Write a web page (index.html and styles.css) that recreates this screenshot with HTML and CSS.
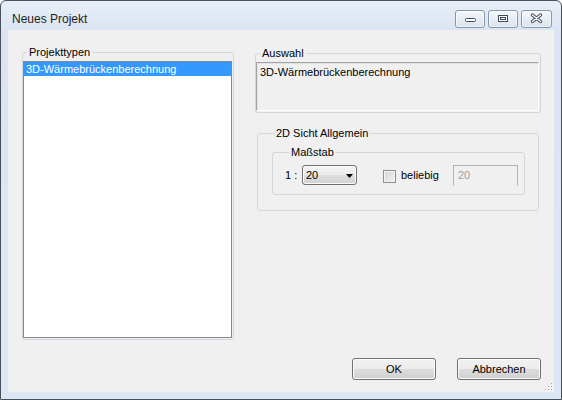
FILE: index.html
```html
<!DOCTYPE html>
<html lang="de">
<head>
<meta charset="utf-8">
<title>Neues Projekt</title>
<link rel="stylesheet" href="styles.css">
</head>
<body>
<div class="window">
  <div class="titlebar">
    <span class="title">Neues Projekt</span>
    <div class="caption-buttons">
      <span class="cbtn cbtn-min">
        <svg width="30" height="17" viewBox="0 0 30 17"><rect x="10.5" y="8.5" width="10" height="3" rx="1" fill="#fff" stroke="#3e4a5a"/></svg>
      </span>
      <span class="cbtn cbtn-max">
        <svg width="30" height="17" viewBox="0 0 30 17"><rect x="10.5" y="5.5" width="9" height="6" fill="#fff" stroke="#3e4a5a"/><rect x="12.5" y="7.5" width="5" height="2" fill="#fff" stroke="#3e4a5a"/></svg>
      </span>
      <span class="cbtn cbtn-close">
        <svg width="31" height="17" viewBox="0 0 31 17"><path d="M11.5 5 L19.5 11.5 M19.5 5 L11.5 11.5" stroke="#3e4a5a" stroke-width="3.4" stroke-linecap="round" fill="none"/><path d="M11.5 5 L19.5 11.5 M19.5 5 L11.5 11.5" stroke="#fff" stroke-width="1.4" stroke-linecap="round" fill="none"/></svg>
      </span>
    </div>
  </div>
  <div class="client">
    <div class="top">
      <fieldset class="group group-types">
        <legend>Projekttypen</legend>
        <div class="listbox">
          <div class="item item-selected">3D-Wärmebrückenberechnung</div>
        </div>
      </fieldset>
      <div class="right">
        <fieldset class="group group-auswahl">
          <legend>Auswahl</legend>
          <div class="readonly">3D-Wärmebrückenberechnung</div>
        </fieldset>
        <fieldset class="group group-sicht">
          <legend>2D Sicht Allgemein</legend>
          <fieldset class="group group-massstab">
            <legend>Maßstab</legend>
            <div class="scale-row">
              <span class="ratio">1 :</span>
              <span class="combo"><span class="combo-value">20</span><svg class="combo-arrow" width="8" height="5" viewBox="0 0 8 5"><path d="M0 0 H7 L3.5 4 Z" fill="#000"/></svg></span>
              <span class="check"></span>
              <span class="check-label">beliebig</span>
              <span class="edit">20</span>
            </div>
          </fieldset>
        </fieldset>
      </div>
    </div>
    <div class="buttons">
      <button class="btn">OK</button>
      <button class="btn">Abbrechen</button>
    </div>
    <svg class="grip" width="10" height="10" viewBox="0 0 10 10">
      <g fill="#fff"><rect x="9" y="3" width="1" height="1"/><rect x="9" y="6" width="1" height="1"/><rect x="6" y="6" width="1" height="1"/><rect x="9" y="9" width="1" height="1"/><rect x="6" y="9" width="1" height="1"/><rect x="3" y="9" width="1" height="1"/></g>
      <g fill="#a3a3a3"><rect x="8" y="2" width="1" height="1"/><rect x="8" y="5" width="1" height="1"/><rect x="5" y="5" width="1" height="1"/><rect x="8" y="8" width="1" height="1"/><rect x="5" y="8" width="1" height="1"/><rect x="2" y="8" width="1" height="1"/></g>
    </svg>
  </div>
</div>
</body>
</html>
```

FILE: styles.css
```css
* {
  box-sizing: border-box;
}

html,
body {
  margin: 0;
  padding: 0;
}

body {
  width: 562px;
  height: 400px;
  overflow: hidden;
  background: #ffffff;
  font-family: "Liberation Sans", Arial, sans-serif;
  font-size: 11px;
  color: #000;
}

.window {
  width: 562px;
  height: 400px;
  border: 1px solid #4a5058;
  border-radius: 6px 6px 0 0;
  background: linear-gradient(to bottom, #e7eef7 0px, #dbe5f2 29px, #dce7f4 100%);
  padding: 0 7px 7px 7px;
  display: flex;
  flex-direction: column;
}

.titlebar {
  height: 29px;
  display: flex;
  align-items: flex-start;
  flex: none;
}

.title {
  margin-top: 11px;
  padding-left: 4px;
  font-size: 12px;
  line-height: 14px;
  color: #1e1e1e;
}

.caption-buttons {
  margin-left: auto;
  margin-top: 9px;
  margin-right: 2px;
  display: flex;
  gap: 3px;
}

.cbtn {
  display: block;
  width: 30px;
  height: 18px;
  border: 1px solid #8797ab;
  border-radius: 3px;
  background: linear-gradient(to bottom, #f5f8fc 0%, #e6edf5 50%, #d9e2ee 100%);
  box-shadow: inset 0 0 0 1px rgba(255, 255, 255, 0.6);
  overflow: hidden;
}

.cbtn svg {
  display: block;
  margin: -1px 0 0 -1px;
}

.cbtn-close {
  width: 31px;
}

.client {
  position: relative;
  height: 362px;
  background: #f0f0f0;
  padding: 16px 13px 12px 14px;
  display: flex;
  flex-direction: column;
}

.top {
  display: flex;
  height: 294px;
  flex: none;
}

.group {
  margin: 0;
  padding: 0;
  min-width: 0;
  border: 1px solid #d3d6da;
  border-radius: 3px;
}

.group legend {
  padding: 0 2px;
  font-size: 11px;
  line-height: 12px;
  height: 12px;
}

.group-types {
  width: 212px;
  height: 294px;
  padding: 3px 1px 1px 0;
}

.group-types legend {
  margin-left: 4px;
}

.listbox {
  height: 277px;
  border: 1px solid #828790;
  background: #ffffff;
}

.item {
  height: 14px;
  line-height: 14px;
  padding-left: 2px;
  white-space: nowrap;
}

.item-selected {
  background: #3399ff;
  color: #ffffff;
}

.right {
  margin-left: 21px;
  width: 286px;
  padding-top: 1px;
}

.group-auswahl {
  width: 286px;
  padding: 3px 1px 1px 0;
}

.group-auswahl legend {
  margin-left: 4px;
}

.readonly {
  height: 49px;
  padding: 3px 3px 0 3px;
  line-height: 13px;
  border: 1px solid;
  border-color: #a3a3a3 #ffffff #ffffff #a3a3a3;
  box-shadow: inset 1px 1px 0 #e2e2e2, 0 0 0 0 transparent;
  background: #f0f0f0;
  white-space: nowrap;
}

.group-sicht {
  margin: 14px 0 0 2px;
  width: 282px;
  padding: 7px 13px 15px 14px;
}

.group-sicht legend {
  margin-left: 2px;
}

.group-massstab {
  padding: 7px 0 8px 12px;
}

.group-massstab legend {
  margin-left: 4px;
}

.scale-row {
  display: flex;
  align-items: flex-start;
  height: 21px;
}

.ratio {
  width: 17px;
  line-height: 20px;
  white-space: nowrap;
}

.combo {
  position: relative;
  display: block;
  width: 55px;
  height: 20px;
  border: 1px solid #707070;
  border-radius: 3px;
  background: linear-gradient(to bottom, #f4f4f4 0%, #ebebeb 50%, #dedede 51%, #d2d2d2 100%);
  box-shadow: inset 0 0 0 1px #fbfbfb;
  padding-left: 3px;
  line-height: 18px;
}

.combo-arrow {
  position: absolute;
  left: 43px;
  top: 8px;
}

.check {
  display: block;
  margin: 5px 0 0 26px;
  width: 13px;
  height: 13px;
  border: 1px solid #8e8f8f;
  background: linear-gradient(135deg, #d6d6d6 0%, #f2f2f2 100%);
  box-shadow: inset 0 0 0 1px #f4f4f4;
}

.check-label {
  margin-left: 5px;
  width: 52px;
  line-height: 20px;
}

.edit {
  display: block;
  width: 65px;
  height: 21px;
  border: 1px solid #b2b2b2;
  border-bottom-color: #f0f0f0;
  padding-left: 4px;
  line-height: 19px;
  color: #a0a0a0;
  background: #f0f0f0;
}

.buttons {
  margin-top: 18px;
  display: flex;
  justify-content: flex-end;
  gap: 21px;
}

.btn {
  width: 84px;
  height: 22px;
  padding: 0;
  margin: 0;
  border: 1px solid #707070;
  border-radius: 3px;
  background: linear-gradient(to bottom, #f2f2f2 0%, #ebebeb 50%, #dddddd 51%, #cfcfcf 100%);
  box-shadow: inset 0 0 0 1px #fcfcfc;
  font-family: "Liberation Sans", Arial, sans-serif;
  font-size: 11px;
  color: #000;
}

.grip {
  position: absolute;
  right: 1px;
  bottom: 1px;
}
```
